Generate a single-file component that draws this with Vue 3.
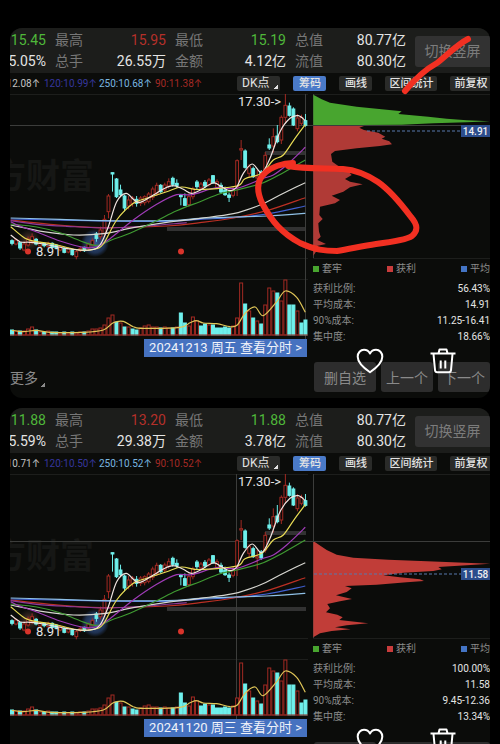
<script setup>
const PITCH = 4.02
const FIRST = 12

// [rising, height] for each trading day
const volumes = [
  [0, 5], [1, 4], [0, 4], [1, 4], [1, 6], [1, 8], [0, 5], [1, 3], [0, 3], [1, 4],
  [0, 3], [0, 3], [1, 2], [0, 3], [1, 2], [0, 3], [1, 2], [1, 3], [0, 3], [1, 4],
  [1, 6], [1, 6], [1, 7], [1, 10], [1, 17], [1, 20], [0, 13], [1, 12], [0, 8], [1, 8],
  [0, 6], [0, 5], [1, 7], [1, 9], [1, 10], [1, 8], [1, 8], [0, 7], [1, 8], [1, 7],
  [0, 7], [1, 8], [0, 22], [0, 12], [1, 9], [1, 18], [1, 14], [0, 9], [0, 11], [1, 10],
  [0, 10], [0, 7], [0, 7], [0, 8], [0, 7], [1, 9], [1, 17], [1, 52], [0, 31], [1, 24],
  [0, 17], [1, 14], [0, 11], [1, 30], [1, 47], [1, 44], [0, 42], [1, 34], [1, 55], [0, 30],
  [0, 30], [1, 24], [0, 12], [0, 15],
].map(([up, h], i) => ({ up: !!up, h, x: FIRST + i * PITCH }))

// [rising, high, body top, body bottom, low], three units to a pixel
const candles = [
  [0, 448, 452, 460, 466], [1, 445, 450, 462, 466], [0, 456, 458, 474, 480], [1, 455, 462, 480, 484],
  [1, 440, 447, 465, 470], [1, 430, 440, 455, 462], [0, 444, 448, 462, 466], [1, 455, 460, 468, 472],
  [0, 458, 460, 467, 472], [1, 455, 460, 470, 474], [0, 457, 460, 472, 476], [0, 462, 465, 474, 478],
  [1, 465, 470, 480, 484], [0, 472, 475, 487, 490], [1, 472, 476, 486, 490], [0, 477, 480, 494, 497],
  [1, 480, 485, 500, 508], [1, 470, 475, 482, 486], [0, 470, 472, 482, 486], [1, 458, 462, 474, 480],
  [1, 445, 452, 466, 470], [0, 426, 432, 445, 455], [1, 410, 420, 440, 448], [1, 375, 388, 430, 440],
  [1, 312, 318, 365, 385], [0, 248, 248, 252, 305], [0, 264, 267, 320, 324], [0, 284, 300, 314, 320],
  [0, 314, 318, 354, 364], [1, 318, 330, 348, 358], [1, 318, 324, 340, 350], [0, 318, 328, 340, 350],
  [1, 318, 324, 340, 348], [1, 316, 320, 338, 346], [1, 306, 312, 334, 340], [1, 290, 297, 322, 330],
  [1, 278, 286, 310, 318], [0, 282, 286, 305, 310], [1, 278, 285, 300, 306], [1, 265, 275, 288, 296],
  [0, 260, 265, 283, 290], [0, 268, 280, 286, 294], [0, 312, 316, 320, 346], [0, 310, 326, 346, 348],
  [1, 310, 320, 344, 350], [1, 290, 296, 320, 328], [0, 270, 276, 290, 300], [1, 276, 282, 294, 300],
  [0, 270, 277, 288, 294], [1, 264, 270, 284, 290], [0, 255, 257, 278, 282], [1, 268, 275, 292, 298],
  [0, 278, 286, 306, 312], [0, 290, 300, 314, 318], [0, 308, 315, 322, 336], [1, 290, 300, 316, 322],
  [1, 208, 212, 290, 318], [1, 150, 176, 180, 210], [0, 178, 183, 232, 236], [1, 222, 230, 250, 262],
  [0, 230, 236, 260, 264], [1, 240, 260, 264, 298], [0, 240, 246, 264, 270], [1, 186, 196, 240, 248],
  [0, 145, 165, 174, 180], [1, 115, 140, 168, 188], [0, 105, 138, 155, 160], [1, 76, 82, 150, 162],
  [1, 10, 46, 82, 100], [0, 38, 48, 76, 80], [0, 52, 57, 105, 108], [1, 72, 84, 116, 124],
  [1, 74, 82, 100, 106], [0, 72, 92, 106, 110],
].map(([up, hi, top, bottom, lo], i) => ({
  up: !!up,
  x: FIRST + i * PITCH,
  hi: 90 + hi / 3,
  top: 90 + top / 3,
  bottom: 90 + bottom / 3,
  lo: 90 + lo / 3,
}))

function curve(points, oy) {
  const p = points.map(([x, y]) => [x / 3, oy + y / 3])
  let d = `M${p[0][0].toFixed(1)} ${p[0][1].toFixed(1)}`
  for (let i = 0; i < p.length - 1; i++) {
    const a = p[i - 1] || p[i]
    const b = p[i]
    const c = p[i + 1]
    const e = p[i + 2] || c
    const v = [
      b[0] + (c[0] - a[0]) / 6, b[1] + (c[1] - a[1]) / 6,
      c[0] - (e[0] - b[0]) / 6, c[1] - (e[1] - b[1]) / 6,
      c[0], c[1],
    ].map((n) => n.toFixed(1))
    d += `C${v.join(' ')}`
  }
  return d
}

const averages = [
  { color: '#3f5fd0', pts: [[32, 387], [300, 393], [500, 394], [600, 388], [700, 383], [800, 372], [916, 348]] },
  { color: '#bc3024', pts: [[32, 390], [150, 403], [300, 413], [500, 408], [600, 398], [700, 384], [800, 362], [916, 323]] },
  { color: '#8c3a9a', pts: [[32, 392], [110, 403], [200, 409], [330, 414], [440, 408], [560, 398]] },
  { color: '#8fc0e6', pts: [[32, 384], [180, 388], [300, 392], [500, 392], [600, 385], [700, 381], [800, 378], [916, 370]] },
  { color: '#d6d6d0', pts: [[32, 405], [130, 425], [220, 435], [310, 431], [400, 413], [500, 397], [600, 385], [700, 371], [780, 345], [830, 320], [870, 300], [916, 278]] },
  { color: '#3f9a32', pts: [[32, 402], [110, 411], [180, 428], [240, 452], [290, 466], [340, 448], [400, 425], [470, 392], [530, 362], [600, 335], [660, 311], [710, 300], [790, 278], [850, 248], [916, 210]] },
  { color: '#a03cb8', pts: [[32, 395], [60, 408], [120, 430], [180, 453], [250, 472], [290, 470], [330, 446], [400, 390], [470, 343], [530, 314], [575, 314], [650, 293], [710, 295], [790, 265], [820, 255], [860, 225], [916, 172]] },
  { color: '#e9dc55', pts: [[32, 410], [75, 445], [110, 455], [160, 462], [230, 479], [280, 478], [310, 462], [350, 390], [400, 340], [440, 325], [500, 305], [545, 291], [600, 299], [710, 288], [735, 266], [785, 250], [820, 210], [850, 195], [885, 145], [916, 104]] },
  { color: '#f0e4e0', pts: [[32, 435], [60, 455], [90, 457], [130, 462], [210, 477], [270, 480], [300, 465], [325, 410], [350, 335], [378, 310], [400, 328], [420, 337], [460, 315], [490, 297], [520, 287], [550, 298], [575, 310], [605, 298], [640, 279], [665, 290], [690, 302], [710, 291], [730, 250], [757, 222], [785, 248], [810, 205], [840, 125], [870, 85], [895, 77], [916, 92]] },
].map((m) => ({ color: m.color, d: curve(m.pts, 90) }))

const volumeAverage = curve([
  [36, 211], [70, 215], [110, 211], [150, 217], [250, 217], [310, 210], [340, 188], [370, 184],
  [400, 200], [430, 205], [540, 202], [570, 188], [590, 182], [610, 189], [650, 191], [690, 200],
  [712, 195], [735, 160], [765, 141], [790, 167], [830, 125], [856, 93], [890, 112], [916, 157],
], 260)

const outline = (pts) => pts.map(([x, y]) => `${(300 + x / 3).toFixed(1)},${(90 + y / 3).toFixed(1)}`).join(' ')

const panels = [
  {
    id: 'dec',
    open: '15.45', high: '15.95', low: '15.19', turnover: '5.05%', hands: '26.55万', amount: '4.12亿',
    ma: [':12.08', '120:10.99', '250:10.68', '90:11.38'],
    crossX: 305.5, crossY: 125,
    date: '20241213 周五',
    avg: '14.91', avgY: 131, dashFrom: 367,
    stats: [['获利比例:', '56.43%'], ['平均成本:', '14.91'], ['90%成本:', '11.25-16.41'], ['集中度:', '18.66%']],
    trapped: outline([[40, 14], [65, 28], [90, 38], [170, 50], [245, 58], [305, 64], [295, 72], [385, 80], [440, 86], [500, 91], [570, 94], [500, 97], [400, 100], [305, 104], [40, 106]]),
    profit: outline([[40, 105], [200, 105], [178, 113], [192, 120], [235, 128], [256, 140], [245, 146], [268, 154], [276, 163], [240, 168], [170, 175], [105, 183], [93, 192], [97, 215], [115, 228], [140, 240], [155, 255], [135, 267], [150, 275], [188, 283], [150, 292], [130, 305], [95, 317], [120, 330], [105, 340], [60, 350], [58, 375], [68, 387], [55, 400], [57, 425], [62, 440], [52, 450], [78, 462], [50, 468], [48, 485], [40, 497]]),
    marked: true,
  },
  {
    id: 'nov',
    open: '11.88', high: '13.20', low: '11.88', turnover: '5.59%', hands: '29.38万', amount: '3.78亿',
    ma: [':10.71', '120:10.50', '250:10.52', '90:10.52'],
    crossX: 236.5, crossY: 161,
    date: '20241120 周三',
    avg: '11.58', avgY: 194, dashFrom: 314,
    stats: [['获利比例:', '100.00%'], ['平均成本:', '11.58'], ['90%成本:', '9.45-12.36'], ['集中度:', '13.34%']],
    trapped: '',
    profit: outline([[40, 213], [62, 228], [80, 240], [110, 254], [160, 263], [265, 269], [420, 275], [570, 281], [500, 286], [415, 291], [425, 298], [400, 303], [310, 308], [250, 316], [300, 322], [360, 328], [372, 333], [320, 337], [230, 344], [135, 348], [155, 355], [140, 366], [108, 376], [156, 387], [120, 394], [82, 402], [90, 415], [78, 427], [112, 434], [128, 442], [118, 450], [205, 460], [140, 466], [105, 472], [152, 478], [95, 483], [60, 490], [40, 502]]),
    marked: false,
  },
]
</script>

<template>
  <main class="page">
    <section v-for="p in panels" :key="p.id" class="panel">
      <header class="quote">
        <span class="val down">{{ p.open }}</span>
        <span class="key">最高</span><span class="val up">{{ p.high }}</span>
        <span class="key">最低</span><span class="val down">{{ p.low }}</span>
        <span class="key">总值</span><span class="val">80.77亿</span>
        <button class="switch" type="button">切换竖屏</button>
        <span class="val">{{ p.turnover }}</span>
        <span class="key">总手</span><span class="val">{{ p.hands }}</span>
        <span class="key">金额</span><span class="val">{{ p.amount }}</span>
        <span class="key">流值</span><span class="val">80.30亿</span>
      </header>

      <nav class="toolbar">
        <div class="mas">
          <span v-for="(m, i) in p.ma" :key="i" :class="['ma', 'ma-' + i]">{{ m }}<i class="arrow">↑</i></span>
        </div>
        <div class="tags">
          <button class="tag dk" type="button">DK点<i class="corner"></i></button>
          <button class="tag active" type="button">筹码</button>
          <button class="tag" type="button">画线</button>
          <button class="tag" type="button">区间统计</button>
          <button class="tag" type="button">前复权</button>
        </div>
      </nav>

      <div class="body">
        <div class="left">
          <svg class="chart" viewBox="10 94 298 245">
            <defs>
              <radialGradient :id="'blue-' + p.id">
                <stop offset="0" stop-color="#3c64a8" stop-opacity="0.9" />
                <stop offset="0.7" stop-color="#2c4a80" stop-opacity="0.6" />
                <stop offset="1" stop-color="#2c4a80" stop-opacity="0" />
              </radialGradient>
              <radialGradient :id="'warm-' + p.id">
                <stop offset="0" stop-color="#8a4a3c" stop-opacity="0.7" />
                <stop offset="1" stop-color="#5a4a40" stop-opacity="0" />
              </radialGradient>
            </defs>
            <text class="watermark" x="-8" y="188">方财富</text>
            <path class="grid" d="M10 94.5H308M10 258.5H308M10 279.5H308" />
            <rect class="band" x="167" y="227" width="139" height="4" />
            <rect class="band" x="265" y="151" width="41" height="4" />
            <circle cx="95" cy="243" r="14" :fill="`url(#blue-${p.id})`" />
            <circle cx="29" cy="240" r="11" :fill="`url(#warm-${p.id})`" />
            <path class="cross" :d="`M10 ${p.crossY + 0.5}H308M${p.crossX} 94V339`" />
            <g v-for="(c, i) in candles" :key="i" :class="c.up ? 'rise' : 'fall'">
              <line v-if="!c.up" :x1="c.x" :x2="c.x" :y1="c.hi" :y2="c.lo" />
              <path v-else :d="`M${c.x} ${c.hi}V${c.top}M${c.x} ${c.bottom}V${c.lo}`" />
              <rect :x="c.x - 1.4" :y="c.top" width="2.8" :height="c.bottom - c.top" />
            </g>
            <path v-for="(m, i) in averages" :key="'m' + i" class="avg" :d="m.d" :stroke="m.color" />
            <circle class="dot" cx="28" cy="251.5" r="3" />
            <circle class="dot" cx="181" cy="251.5" r="3" />
            <text class="mark" x="36" y="256">8.91</text>
            <text class="mark" x="238" y="106">17.30-&gt;</text>
            <g v-for="(v, i) in volumes" :key="'v' + i" :class="v.up ? 'rise' : 'fall'">
              <rect :x="v.x - 1.5" :y="335 - v.h" width="3" :height="v.h" />
            </g>
            <path class="base" d="M10 335H308" />
            <path class="avg" :d="volumeAverage" stroke="#e0c658" />
          </svg>
          <button class="date" type="button">{{ p.date }} 查看分时 &gt;</button>
        </div>

        <div class="right">
          <svg class="chart" viewBox="308 94 182 166">
            <path class="grid" d="M313 94.5H490M313 258.5H490" />
            <path class="cross" d="M313.5 94V258" />
            <polygon class="trapped" :points="p.trapped" />
            <polygon :class="['profit', { dim: p.marked }]" :points="p.profit" />
            <path class="cross" :d="`M308 ${p.crossY + 0.5}H490`" />
            <path class="dash" :d="`M${p.dashFrom} ${p.avgY}H461`" />
            <rect class="badge" x="461" :y="p.avgY - 6" width="29" height="12" />
            <text class="badge-text" x="475.5" :y="p.avgY + 4">{{ p.avg }}</text>
          </svg>
          <ul class="legend">
            <li><i class="sq green"></i>套牢</li>
            <li><i class="sq red"></i>获利</li>
            <li><i class="sq blue"></i>平均</li>
          </ul>
          <dl class="stats">
            <div v-for="s in p.stats" :key="s[0]" class="stat">
              <dt>{{ s[0] }}</dt>
              <dd>{{ s[1] }}</dd>
            </div>
          </dl>
        </div>
      </div>

      <footer class="footer">
        <button class="more" type="button">更多<i class="corner"></i></button>
        <div class="actions">
          <button class="action wide" type="button">删自选</button>
          <button class="action" type="button">上一个</button>
          <button class="action" type="button">下一个</button>
        </div>
      </footer>

      <button class="float heart" type="button" aria-label="收藏">
        <svg viewBox="0 0 28 26">
          <path d="M14 24.3C10 21.5 1.7 15.5 1.7 8.7C1.7 4.6 4.5 1.8 8 1.8C10.7 1.8 12.9 3.4 14 5.5C15.1 3.4 17.3 1.8 20 1.8C23.5 1.8 26.3 4.6 26.3 8.7C26.3 15.5 18 21.5 14 24.3Z" />
        </svg>
      </button>
      <button class="float trash" type="button" aria-label="删除">
        <svg viewBox="0 0 28 26">
          <path d="M1.5 5.5H26.5M9.5 5.2L10.5 1.5H17.5L18.5 5.2M4.5 6L6 22.2Q6.2 24.3 8.3 24.3H19.7Q21.8 24.3 22 22.2L23.5 6M11.7 12.5V20.5M16.3 12.5V20.5" />
        </svg>
      </button>

      <svg v-if="p.marked" class="ink" viewBox="10 28 480 370">
        <path d="M468 39C458 44 447 55 437 63C428 68 419 74 405 91" />
        <path d="M293 163C283 163 271 167 265 173C257 180 256 190 262 203C272 222 282 233 300 243C315 250 325 251 337 251C350 249 362 246 376 244C392 242 406 240 412 236C418 231 418 225 411 217C402 205 391 191 378 182C366 174 356 170 343 169C325 168 305 169 288 166" />
      </svg>
    </section>
  </main>
</template>

<style>
body {
  margin: 0;
  background: #000;
}
</style>

<style scoped>
.page {
  box-sizing: border-box;
  height: 100vh;
  overflow-y: auto;
  scrollbar-width: none;
  padding: 28px 10px 10px;
  background: #000;
  color: #e4e4e4;
  font-family: Roboto, Inter, "Noto Sans CJK SC", sans-serif;
}
.panel {
  position: relative;
  overflow: hidden;
  margin-bottom: 10px;
  border-radius: 12px;
  background: #0b0c0a;
}
button {
  margin: 0;
  padding: 0;
  border: 0;
  background: none;
  color: inherit;
  font: inherit;
  white-space: nowrap;
}
i {
  font-style: normal;
}
.quote {
  display: grid;
  grid-template-columns: 36px 28px 1fr 28px 1fr 28px 1fr 75px;
  grid-auto-rows: 21px;
  column-gap: 9px;
  padding: 2px 0 1px;
  background: #1c1d1b;
  font-size: 14px;
  line-height: 21px;
  white-space: nowrap;
}
.val {
  display: flex;
  justify-content: flex-end;
}
.key {
  color: #777;
}
.up {
  color: #b5302a;
}
.down {
  color: #4fb83a;
}
.switch {
  grid-column: 8;
  grid-row: 1 / 3;
  height: 31px;
  align-self: center;
  border-radius: 3px 0 0 3px;
  background: #323232;
  color: #7c7c7c;
}
.toolbar {
  display: flex;
  align-items: center;
  height: 21px;
}
.mas {
  flex: 0 0 227px;
  display: grid;
  grid-template-columns: 30px 51px 52px 1fr;
  column-gap: 4px;
  font-size: 10px;
  line-height: 15px;
  white-space: nowrap;
}
.ma {
  display: flex;
}
.ma-0 {
  justify-content: flex-end;
  color: #c4c4c4;
}
.ma-1 {
  color: #36369c;
}
.ma-2 {
  color: #79b6e0;
}
.ma-3 {
  color: #a52a25;
}
.tags {
  flex: 1;
  display: flex;
  gap: 13px;
  min-width: 0;
}
.tag {
  flex: none;
  min-width: 33px;
  height: 15px;
  padding: 0 4px;
  border-radius: 2px;
  background: #2a2b29;
  font-size: 11px;
  font-weight: 500;
  line-height: 15px;
}
.dk {
  display: flex;
  align-items: flex-end;
  gap: 5px;
  padding: 0 2px 0 5px;
  font-size: 12px;
  font-weight: 400;
}
.active {
  background: #4a7ac8;
}
.corner {
  width: 4px;
  height: 4px;
  background: linear-gradient(135deg, transparent 50%, currentColor 50%);
}
.dk .corner {
  margin-bottom: 2px;
}
.body {
  display: grid;
  grid-template-columns: 298fr 182fr;
}
.left {
  display: flex;
  flex-direction: column;
  align-items: flex-end;
}
.chart {
  display: block;
  width: 100%;
  height: auto;
}
.watermark {
  fill: #161715;
  font-size: 34px;
  font-weight: 700;
}
.grid,
.cross,
.avg,
.base,
.dash {
  fill: none;
  stroke-width: 1;
}
.grid {
  stroke: #1d1e1c;
}
.cross {
  stroke: #3c3d3b;
}
.base {
  stroke: #8e2822;
}
.band {
  fill: #323232;
}
.dash {
  stroke: #5878ad;
  stroke-dasharray: 3 2;
}
.rise {
  fill: #0b0c0a;
  stroke: #a32a23;
  stroke-width: 1;
}
.fall {
  fill: #6ff0ec;
  stroke: #6ff0ec;
  stroke-width: 1;
}
.avg {
  stroke-width: 1.2;
}
.dot {
  fill: #d9342b;
}
.mark {
  fill: #e6e6e6;
  font-size: 13px;
}
.trapped {
  fill: #48a52f;
}
.profit {
  fill: #c13d38;
}
.dim {
  fill: #b03a36;
}
.badge {
  fill: #2c4d8c;
}
.badge-text {
  fill: #f0f0f0;
  font-size: 10px;
  font-weight: 500;
  text-anchor: middle;
}
.date {
  height: 18px;
  margin-right: 1px;
  padding: 0 5px;
  background: #4672c0;
  color: #f0f3fa;
  font-size: 13px;
  line-height: 18px;
}
.legend {
  display: flex;
  justify-content: space-between;
  margin: 0;
  padding: 0 0 0 5px;
  list-style: none;
  color: #8c8c8c;
  font-size: 10px;
  line-height: 18px;
}
.legend li {
  display: flex;
  align-items: center;
  gap: 3px;
}
.sq {
  width: 6px;
  height: 6px;
}
.green {
  background: #48a52f;
}
.red {
  background: #c83c3c;
}
.blue {
  background: #4474c4;
}
.stats {
  margin: 0;
  padding: 3px 0 0 5px;
  font-size: 10px;
  line-height: 16px;
}
.stat {
  display: flex;
  justify-content: space-between;
}
.stat dt {
  color: #8c8c8c;
}
.stat dd {
  margin: 0;
}
.footer {
  display: flex;
  align-items: center;
  justify-content: space-between;
  padding: 5px 0 6px;
  color: #8a8a8a;
  font-size: 14px;
}
.more {
  display: flex;
  align-items: flex-end;
  gap: 3px;
}
.actions {
  display: flex;
  gap: 5px;
}
.action {
  width: 52px;
  height: 30px;
  border-radius: 3px;
  background: #2d2d2d;
}
.wide {
  width: 62px;
}
.float {
  position: absolute;
  bottom: 24px;
  width: 28px;
  height: 26px;
}
.heart {
  right: 106px;
}
.trash {
  right: 33px;
}
.float svg {
  display: block;
  width: 100%;
  height: 100%;
  fill: none;
  stroke: #fff;
  stroke-width: 2;
  stroke-linejoin: round;
}
.ink {
  position: absolute;
  top: 0;
  left: 0;
  width: 100%;
  height: 100%;
  fill: none;
  stroke: #f23022;
  stroke-width: 6;
  stroke-linecap: round;
  stroke-linejoin: round;
  pointer-events: none;
}
</style>
